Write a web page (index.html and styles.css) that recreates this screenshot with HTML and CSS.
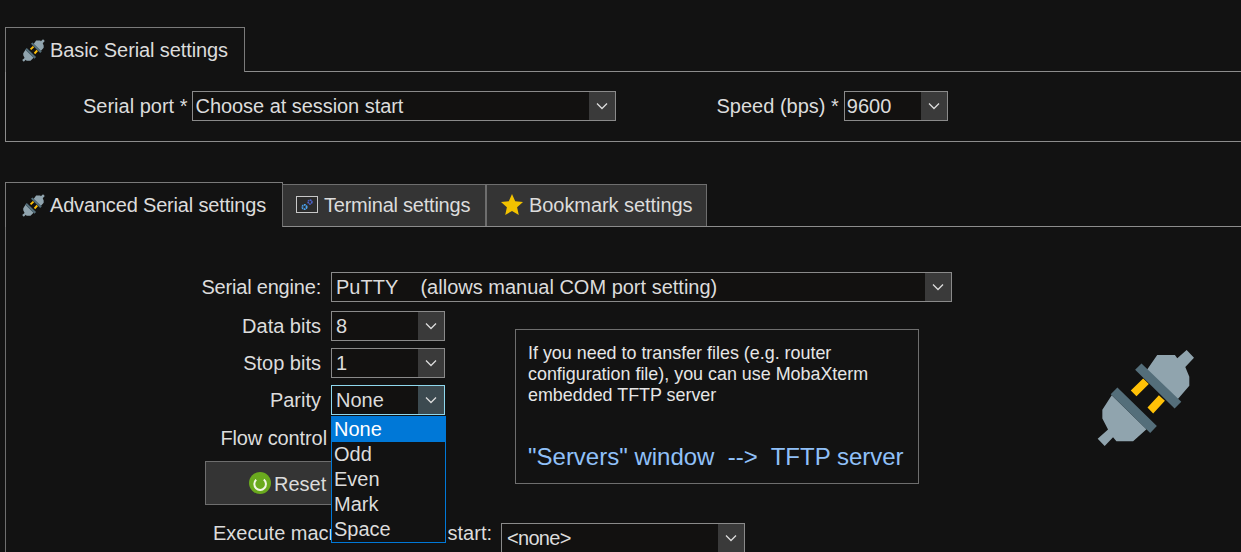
FILE: index.html
```html
<!DOCTYPE html>
<html lang="en">
<head>
<meta charset="utf-8">
<title>Serial settings</title>
<link rel="stylesheet" href="styles.css">
</head>
<body>
<svg class="defs" width="0" height="0" aria-hidden="true">
  <defs>
    <g id="plug">
      <path fill="#90a4ae" d="M232 60H285L292 70 320 45 342 68 316 96 328 125V152L292 194 200 106Z"/>
      <path fill="#90a4ae" d="M96 180L200 282 160 318H110L100 306 75 332 54 310 85 283 68 250V224Z"/>
      <path fill="#546e7a" d="M185 85L304 200 284 220 166 104ZM113 157L231 272 211 293 93 177Z"/>
      <path fill="#ffc107" d="M190 130L207 147 170 183 153 166ZM237 180L255 197 220 235 203 217Z"/>
    </g>
    <path id="chev" fill="none" stroke="currentColor" stroke-width="1.3" d="M1 1.5l5 5 5-5"/>
  </defs>
</svg>

<section class="basic">
  <div class="tabs">
    <div class="tab active basic-tab">
      <svg class="tab-icon" viewBox="52 42 293 293"><use href="#plug"/></svg>
      <span>Basic Serial settings</span>
    </div>
  </div>
  <div class="panel basic-panel">
    <span class="label port-label">Serial port *</span>
    <div class="select port-select"><span class="value port-value">Choose at session start</span><span class="arrow"><svg width="12" height="8"><use href="#chev"/></svg></span></div>
    <span class="label speed-label">Speed (bps) *</span>
    <div class="select speed-select"><span class="value speed-value">9600</span><span class="arrow"><svg width="12" height="8"><use href="#chev"/></svg></span></div>
  </div>
</section>

<section class="advanced">
  <div class="tabs">
    <div class="tab active adv-tab">
      <svg class="tab-icon" viewBox="52 42 293 293"><use href="#plug"/></svg>
      <span>Advanced Serial settings</span>
    </div>
    <div class="tab term-tab">
      <svg class="term-icon" viewBox="0 0 22 18">
        <rect x=".5" y=".5" width="21" height="16" fill="#2c2c2c" stroke="#c8c8c8"/>
        <circle cx="8.500" cy="11" r="2.200" fill="none" stroke="#4aa3f0" stroke-width="1.800" stroke-dasharray="1.600 .6"/>
        <circle cx="14" cy="6" r="1.900" fill="none" stroke="#4d62c8" stroke-width="1.700" stroke-dasharray="1.500 .5"/>
      </svg>
      <span>Terminal settings</span>
    </div>
    <div class="tab book-tab">
      <svg class="star-icon" viewBox="0 0 22 22"><path fill="#f2c200" d="M11 0l3.200 7.200 7.800.8-5.900 5.200 1.700 7.800L11 17l-6.800 4 1.700-7.800L0 8l7.800-.8z"/></svg>
      <span>Bookmark settings</span>
    </div>
  </div>
  <div class="panel adv-panel">
    <div class="row engine-row">
      <span class="label field-label engine-label">Serial engine:</span>
      <div class="select engine-select"><span class="value">PuTTY&nbsp;&nbsp;&nbsp; (allows manual COM port setting)</span><span class="arrow"><svg width="12" height="8"><use href="#chev"/></svg></span></div>
    </div>
    <div class="middle">
      <div class="fields">
        <div class="row">
          <span class="label field-label">Data bits</span>
          <div class="select small"><span class="value">8</span><span class="arrow"><svg width="12" height="8"><use href="#chev"/></svg></span></div>
        </div>
        <div class="row">
          <span class="label field-label">Stop bits</span>
          <div class="select small"><span class="value">1</span><span class="arrow"><svg width="12" height="8"><use href="#chev"/></svg></span></div>
        </div>
        <div class="row parity-row">
          <span class="label field-label">Parity</span>
          <div class="select small focused"><span class="value">None</span><span class="arrow"><svg width="12" height="8"><use href="#chev"/></svg></span></div>
          <ul class="dropdown">
            <li class="selected">None</li>
            <li>Odd</li>
            <li>Even</li>
            <li>Mark</li>
            <li>Space</li>
          </ul>
        </div>
        <div class="row flow-row">
          <span class="label field-label flow-label">Flow control</span>
          <div class="select small"><span class="value"></span><span class="arrow"></span></div>
        </div>
        <button class="reset" type="button">
          <svg class="reset-icon" viewBox="0 0 22 22">
            <circle cx="11" cy="11" r="11" fill="#6aaa1e"/>
            <path fill="none" stroke="#f2f7e6" stroke-width="2" d="M7.200 7.800a5.800 5.800 0 1 0 7.600-.2"/>
          </svg>
          <span>Reset</span>
        </button>
      </div>
      <div class="info">
        <p class="info-text">If you need to transfer files (e.g. router configuration file), you can use MobaXterm embedded TFTP server</p>
        <p class="info-link">"Servers" window&nbsp; --&gt;&nbsp; TFTP server</p>
      </div>
      <svg class="big-plug" viewBox="52 42 293 293"><use href="#plug"/></svg>
    </div>
    <div class="row macro-row">
      <span class="label macro-label">Execute macro at session start:</span>
      <div class="select macro-select"><span class="value macro-value">&lt;none&gt;</span><span class="arrow"><svg width="12" height="8"><use href="#chev"/></svg></span></div>
    </div>
  </div>
</section>
</body>
</html>
```
FILE: styles.css
```css
* { box-sizing: border-box; }
html, body { margin: 0; height: 552px; overflow: hidden; }
body {
  background: #121212;
  color: #dcdcdc;
  font-family: "Liberation Sans", Arial, sans-serif;
  font-size: 20px;
  line-height: 24px;
}
.defs { position: absolute; }

.basic { padding: 27px 0 0 5px; }
.advanced { padding: 41px 0 0 5px; }

.tabs { display: flex; position: relative; z-index: 1; }
.tab {
  display: flex;
  align-items: center;
  flex: none;
  border: 1px solid #6e6e6e;
  border-bottom: 0;
  background: #343434;
}
.tab.active { background: #121212; border-color: #7a7a7a; }
.tab-icon { width: 23px; height: 23px; margin-right: 5px; flex: none; }
.basic-tab { width: 240px; height: 45px; padding-left: 16px; letter-spacing: -0.1px; }
.adv-tab { width: 278px; height: 45px; padding-left: 16px; margin-top: -1px; letter-spacing: -0.17px; }
.term-tab { width: 205px; height: 42px; margin-left: -1px; margin-top: 1px; padding: 0 0 1px 13px; border-right: 2px solid #6e6e6e; letter-spacing: -0.23px; }
.book-tab { width: 221px; height: 42px; margin-top: 1px; padding: 0 0 1px 14px; margin-left: -1px; letter-spacing: -0.06px; }
.term-icon { width: 22px; height: 18px; margin-right: 6px; }
.star-icon { width: 22px; height: 22px; margin-right: 6px; }

.panel { border: 1px solid #8c8c8c; }
.basic-panel {
  display: flex;
  align-items: center;
  height: 71px;
  margin-top: -1px;
  border-right: 0;
  padding-bottom: 1px;
}
.adv-panel {
  margin-top: -1px;
  border-right: 0;
  border-bottom: 0;
  border-left-color: #6e6e6e;
  padding-top: 45px;
  height: 340px;
}

.label { white-space: nowrap; }
.port-label { margin-left: 77px; }
.speed-label { margin-left: 101px; }

.select {
  display: flex;
  height: 30px;
  border: 1px solid #8a8a8a;
  background: #121110;
  flex: none;
}
.value { flex: 1; padding-left: 4px; line-height: 28px; white-space: nowrap; overflow: hidden; }
.port-value { padding-left: 3px; letter-spacing: -0.05px; }
.speed-value { padding-left: 2px; }
.macro-value { padding-left: 5px; letter-spacing: -0.7px; }
.arrow {
  display: flex;
  align-items: center;
  justify-content: center;
  width: 26px;
  background: #3a3a3a;
  color: #dcdcdc;
}
.port-select { width: 424px; margin-left: 4px; }
.speed-select { width: 104px; margin-left: 5px; }
.engine-select { width: 621px; }
.small { width: 114px; }
.focused { border-color: #8fd8ee; }
.focused .arrow { background: #3c4a50; }
.macro-select { width: 244px; margin: 2px 0 0 9px; }

.row { display: flex; align-items: center; }
.field-label { width: 315px; margin-right: 10px; text-align: right; }
.engine-label { letter-spacing: -0.2px; }
.flow-label { position: relative; left: 6px; letter-spacing: -0.1px; }

.middle { display: flex; align-items: flex-start; margin-top: 9px; }
.fields { display: flex; flex-direction: column; gap: 7px; width: 509px; flex: none; }
.parity-row { position: relative; }
.flow-row { margin-top: 1px; margin-bottom: 1px; }

.dropdown {
  position: absolute;
  left: 325px;
  top: 31px;
  z-index: 2;
  width: 115px;
  height: 127px;
  margin: 0;
  padding: 0;
  list-style: none;
  background: #121212;
  border: 1px solid #0078d7;
}
.dropdown li { height: 25px; padding-left: 2px; line-height: 25px; }
.dropdown li.selected { background: #0078d7; color: #fff; }

.reset {
  display: flex;
  align-items: center;
  width: 240px;
  height: 44px;
  margin: 0 0 0 199px;
  padding: 1px 0 0 43px;
  border: 1px solid #6e6e6e;
  background: #343434;
  color: #dcdcdc;
  font: inherit;
  text-align: left;
}
.reset-icon { width: 22px; height: 22px; margin: -1px 3px 0 0; flex: none; }
.reset span { white-space: nowrap; }

.info {
  width: 404px;
  height: 155px;
  margin-top: 18px;
  padding: 13px 12px 0 12px;
  border: 1px solid #6e6e6e;
}
.info-text { margin: 0; font-size: 17.900px; line-height: 21px; color: #e6e6e6; }
.info-link { margin: 36px 0 0; font-size: 24px; line-height: 30px; color: #90c0f8; white-space: nowrap; }

.big-plug { width: 98px; height: 98px; margin: 38px 0 0 178px; flex: none; }

.macro-row { margin-top: 16px; align-items: flex-start; }
.macro-label { margin-left: 207px; }
```
